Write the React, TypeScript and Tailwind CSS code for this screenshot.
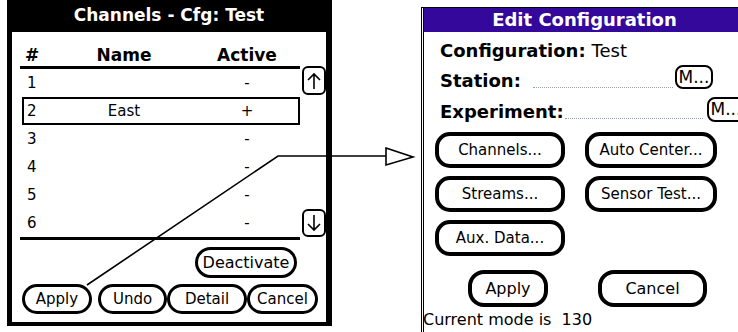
import clsx from "clsx";

type BtnProps = { children: React.ReactNode; className?: string };

function Btn({ children, className }: BtnProps) {
  return (
    <div
      className={clsx(
        "flex items-center justify-center border-black bg-white text-black whitespace-nowrap",
        className
      )}
    >
      {children}
    </div>
  );
}

function ScrollArrow({ down }: { down?: boolean }) {
  return (
    <svg width="16" height="20" viewBox="0 0 16 20" fill="none" stroke="black" strokeWidth="1.6">
      {down ? (
        <path d="M8 2v15 M2 11l6 6 6-6" />
      ) : (
        <path d="M8 18V3 M2 9l6-6 6 6" />
      )}
    </svg>
  );
}

const rows = [
  { n: "1", name: "", active: "-" },
  { n: "2", name: "East", active: "+" },
  { n: "3", name: "", active: "-" },
  { n: "4", name: "", active: "-" },
  { n: "5", name: "", active: "-" },
  { n: "6", name: "", active: "-" },
];

function ChannelsForm() {
  return (
    <div className="ml-[7px] flex h-[326px] w-[325px] shrink-0 flex-col border-b-[4px] border-l-[5px] border-r-[6px] border-black bg-white">
      <div className="flex h-[32px] items-center justify-center bg-black text-[17px] font-bold text-white">
        Channels - Cfg: Test
      </div>

      <div className="mt-[12px] flex">
        <div className="ml-[8px] w-[280px]">
          <div className="ml-[2px] grid h-[22px] w-[278px] grid-cols-[70px_60px_1fr] items-center border-x-2 border-transparent text-[17px] font-bold leading-none">
            <span className="pl-[1px]">#</span>
            <span className="text-center">Name</span>
            <span className="pl-[42px] text-center">Active</span>
          </div>
          <div className="h-[3px] bg-black" />
          {rows.map((r) => (
            <div
              key={r.n}
              className={clsx(
                "ml-[2px] grid h-[28px] w-[278px] grid-cols-[70px_60px_1fr] items-center border-2 text-[15px] leading-none",
                r.n === "2" ? "border-black" : "border-transparent"
              )}
            >
              <span className="pl-[3px]">{r.n}</span>
              <span className="text-center">{r.name}</span>
              <span className="pl-[42px] text-center">{r.active}</span>
            </div>
          ))}
          <div className="h-[3px] bg-black" />
        </div>
        <div className="ml-[2px] flex w-[25px] flex-col justify-between pb-[3px] pt-[22px]">
          <Btn className="h-[29px] rounded-[6px] border-2">
            <ScrollArrow />
          </Btn>
          <Btn className="h-[28px] rounded-[6px] border-2">
            <ScrollArrow down />
          </Btn>
        </div>
      </div>

      <div className="mr-[29px] mt-[7px] flex justify-end">
        <Btn className="h-[31px] w-[102px] rounded-full border-[3px] text-[16px]">Deactivate</Btn>
      </div>

      <div className="ml-[10px] mt-[6px] flex text-[15px]">
        <Btn className="h-[30px] w-[70px] rounded-full border-[3px]">Apply</Btn>
        <Btn className="ml-[6px] h-[30px] w-[69px] rounded-full border-[3px]">Undo</Btn>
        <Btn className="h-[30px] w-[80px] rounded-full border-[3px]">Detail</Btn>
        <Btn className="h-[30px] w-[71px] rounded-full border-[3px]">Cancel</Btn>
      </div>
    </div>
  );
}

function EditConfiguration() {
  return (
    <div className="ml-[89px] mt-[7px] flex h-[325px] w-[324px] shrink-0 flex-col border-l-[3px] border-t border-double border-black bg-white">
      <div className="flex h-[24px] items-center justify-center bg-[#33089b] text-[18px] font-bold leading-none text-white">
        Edit Configuration
      </div>

      <div className="ml-[16px] mt-[7px] flex h-[22px] items-center text-[18px]">
        <span className="font-bold">Configuration:</span>
        <span className="ml-[6px]">Test</span>
      </div>

      <div className="ml-[16px] mt-[4px] flex h-[24px] items-end text-[18px]">
        <span className="mb-[-1px] w-[93px] font-bold leading-none">Station:</span>
        <div className="mb-[1px] w-[140px] border-b border-dotted border-gray-400" />
        <Btn className="ml-[2px] h-[24px] w-[38px] rounded-[8px] border-2 text-[17px] leading-none">M...</Btn>
      </div>

      <div className="ml-[16px] mt-[8px] flex h-[25px] items-end text-[18px]">
        <span className="mb-[1px] w-[125px] font-bold leading-none">Experiment:</span>
        <div className="mb-[3px] w-[138px] border-b border-dotted border-gray-400" />
        <Btn className="ml-[4px] h-[25px] w-[38px] rounded-[8px] border-2 text-[17px] leading-none">M...</Btn>
      </div>

      <div className="ml-[11px] mt-[10px] grid w-[282px] grid-cols-[130px_132px] gap-x-[20px] gap-y-[8px] text-[15px]">
        <Btn className="h-[36px] rounded-[15px] border-[4px]">Channels...</Btn>
        <Btn className="h-[36px] rounded-[15px] border-[4px]">Auto Center...</Btn>
        <Btn className="h-[36px] rounded-[15px] border-[4px]">Streams...</Btn>
        <Btn className="h-[36px] rounded-[15px] border-[4px]">Sensor Test...</Btn>
        <Btn className="h-[36px] rounded-[15px] border-[4px]">Aux. Data...</Btn>
      </div>

      <div className="ml-[44px] mt-[14px] flex gap-[50px] text-[16px]">
        <Btn className="h-[37px] w-[80px] rounded-[16px] border-[4px]">Apply</Btn>
        <Btn className="h-[37px] w-[109px] rounded-[16px] border-[4px]">Cancel</Btn>
      </div>

      <div className="ml-[-1px] mt-[3px] text-[16px] leading-[20px] whitespace-pre">Current mode is  130</div>
    </div>
  );
}

export default function App() {
  return (
    <div className="relative flex h-[332px] w-[738px] overflow-hidden bg-white font-['DejaVu_Sans',sans-serif] text-black">
      <ChannelsForm />
      <EditConfiguration />
      <svg className="pointer-events-none absolute inset-0" width="738" height="332" viewBox="0 0 738 332">
        <polyline points="87,285 278,156 386,156" fill="none" stroke="black" strokeWidth="1.6" />
        <polygon points="386,148 413,157 386,165" fill="white" stroke="black" strokeWidth="1.6" />
      </svg>
    </div>
  );
}
